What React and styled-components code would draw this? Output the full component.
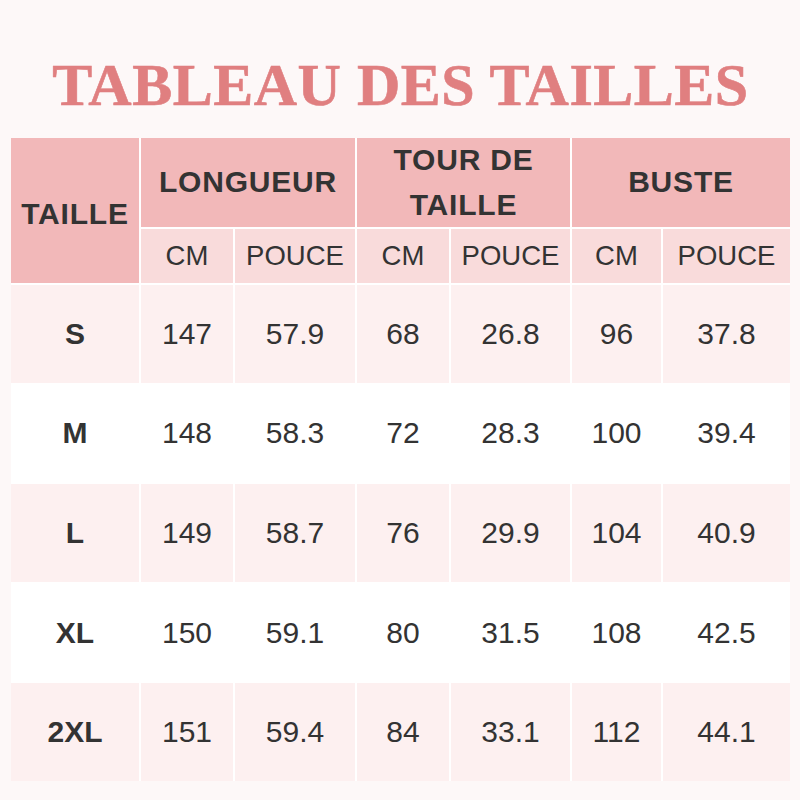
import React from 'react';
import styled, { createGlobalStyle, css } from 'styled-components';

const Global = createGlobalStyle`
  html, body {
    margin: 0;
    padding: 0;
    background: #fdf8f8;
  }
`;

const Page = styled.div`
  width: 800px;
  height: 800px;
  background: #fdf8f8;
  box-sizing: border-box;
  padding: 0 10px 0 11px;
`;

const Title = styled.h1`
  margin: 0;
  height: 138px;
  display: flex;
  align-items: center;
  justify-content: center;
  padding-top: 32px;
  box-sizing: border-box;
  font-family: "Liberation Serif", serif;
  font-weight: bold;
  font-size: 60px;
  letter-spacing: 0.5px;
  color: #e07f80;
  -webkit-text-stroke: 0.6px #e07f80;
`;

const Grid = styled.div`
  display: grid;
  grid-template-columns: 128px 92px 120px 92px 119px 89px 127px;
  grid-template-rows: 89px 54px repeat(5, 97.6px);
  gap: 2px;
  background: #ffffff;
  width: 779px;
`;

const Cell = styled.div`
  display: flex;
  align-items: center;
  justify-content: center;
  text-align: center;
  font-family: "Liberation Sans", Arial, sans-serif;
  color: #333333;
  font-size: 30px;
  background: ${p => (p.odd ? '#fdf0f0' : '#ffffff')};

  ${p => p.head && css`
    background: #f2b8b9;
    font-weight: bold;
    font-size: 30px;
    letter-spacing: 0.8px;
    line-height: 45px;
  `}

  ${p => p.sub && css`
    background: #f9dbdb;
    font-size: 27.5px;
  `}

  ${p => p.size && css`
    font-weight: bold;
  `}
`;

const Taille = styled(Cell)`
  grid-row: span 2;
  padding-top: 5px;
`;

const Group = styled(Cell)`
  grid-column: span 2;
  padding-bottom: 2px;
`;

const rows = [
  ['S', '147', '57.9', '68', '26.8', '96', '37.8'],
  ['M', '148', '58.3', '72', '28.3', '100', '39.4'],
  ['L', '149', '58.7', '76', '29.9', '104', '40.9'],
  ['XL', '150', '59.1', '80', '31.5', '108', '42.5'],
  ['2XL', '151', '59.4', '84', '33.1', '112', '44.1'],
];

export default function App() {
  return (
    <Page>
      <Global />
      <Title>TABLEAU DES TAILLES</Title>
      <Grid>
        <Taille head>TAILLE</Taille>
        <Group head>LONGUEUR</Group>
        <Group head>TOUR DE<br />TAILLE</Group>
        <Group head>BUSTE</Group>
        {['CM', 'POUCE', 'CM', 'POUCE', 'CM', 'POUCE'].map((t, i) => (
          <Cell sub key={i}>{t}</Cell>
        ))}
        {rows.map((r, ri) =>
          r.map((v, ci) => (
            <Cell key={ri + '-' + ci} odd={ri % 2 === 0} size={ci === 0}>
              {v}
            </Cell>
          ))
        )}
      </Grid>
    </Page>
  );
}
